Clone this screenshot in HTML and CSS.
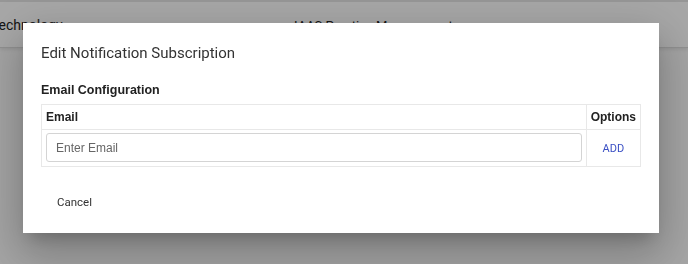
FILE: index.html
```html
<!DOCTYPE html>
<html>
<head>
<meta charset="utf-8">
<link rel="stylesheet" href="styles.css">
</head>
<body>
<div class="topstrip"></div>
<header class="app-header">
  <div class="logo">t<span class="logo-dark">echn</span><span class="logo-accent">ology</span></div>
  <div class="app-title">IAAS Practice Management</div>
</header>
<main class="page"></main>

<div class="backdrop"></div>
<div class="dialog">
  <h2 class="dialog-title">Edit Notification Subscription</h2>
  <h3 class="section-title">Email Configuration</h3>
  <table class="email-table">
    <thead>
      <tr>
        <th class="col-email">Email</th>
        <th class="col-options">Options</th>
      </tr>
    </thead>
    <tbody>
      <tr>
        <td class="col-email"><input class="email-input" type="text" placeholder="Enter Email"></td>
        <td class="col-options"><button class="add-btn">ADD</button></td>
      </tr>
    </tbody>
  </table>
  <div class="actions">
    <button class="cancel-btn">Cancel</button>
  </div>
</div>
</body>
</html>
```

FILE: styles.css
```css
html, body {
  margin: 0;
  padding: 0;
}
body {
  background: #fafafa;
  font-family: "Liberation Sans", Arial, sans-serif;
  width: 688px;
  height: 264px;
  overflow: hidden;
}
.topstrip {
  height: 2px;
  background: #e6e6e6;
}
.app-header {
  height: 45px;
  background: #ffffff;
  border-bottom: 1px solid #dcdcdc;
  box-shadow: 0 2px 3px rgba(0,0,0,0.08);
  display: flex;
  align-items: flex-start;
  font-family: Roboto, sans-serif;
}
.logo {
  margin-left: -6px;
  padding-top: 15px;
  font-size: 14px;
  color: #222;
  width: 300px;
}
.logo-accent {
  color: #333;
}
.app-title {
  padding-top: 16px;
  padding-left: -3px;
  font-size: 13px;
  color: #222;
}
.page {
  height: 216px;
}
.backdrop {
  position: fixed;
  inset: 0;
  background: rgba(0,0,0,0.34);
}
.dialog {
  position: absolute;
  left: 23px;
  top: 23px;
  width: 636px;
  height: 210px;
  box-sizing: border-box;
  background: #fff;
  padding: 20px 18px 14px;
  box-shadow: 0 11px 15px -7px rgba(0,0,0,.2), 0 24px 38px 3px rgba(0,0,0,.14), 0 9px 46px 8px rgba(0,0,0,.12);
  display: flex;
  flex-direction: column;
}
.dialog-title {
  margin: 0;
  font-family: Roboto, sans-serif;
  font-weight: 400;
  font-size: 15px;
  line-height: 20px;
  color: #333;
}
.section-title {
  margin: 19px 0 6px;
  font-size: 12.5px;
  line-height: 16px;
  font-weight: 700;
  color: #222;
}
.email-table {
  width: 100%;
  border-collapse: collapse;
  font-size: 12px;
}
.email-table th,
.email-table td {
  border: 1px solid #e8e8e8;
  padding: 4px;
  text-align: left;
}
.email-table th {
  font-weight: 700;
  line-height: 16px;
  color: #222;
}
.email-table td {
  padding: 3px 4px 4px;
}
.email-table .col-options {
  width: 1%;
  white-space: nowrap;
}
.email-table td.col-options {
  text-align: center;
}
.email-input {
  display: block;
  width: 100%;
  box-sizing: border-box;
  height: 29px;
  border: 1px solid #d4d4d4;
  border-radius: 3px;
  padding: 0 9px;
  font-family: "Liberation Sans", Arial, sans-serif;
  font-size: 12px;
  color: #333;
  outline: none;
}
.email-input::placeholder {
  color: #666;
}
.add-btn {
  border: 0;
  background: none;
  padding: 0;
  font-family: Roboto, sans-serif;
  font-size: 11px;
  color: #3a4fc4;
  cursor: pointer;
}
.actions {
  margin-top: 17px;
  display: flex;
}
.cancel-btn {
  height: 36px;
  border: 0;
  background: none;
  padding: 0 16px;
  font-family: Roboto, sans-serif;
  font-size: 11.5px;
  color: #333;
  cursor: pointer;
}
```
